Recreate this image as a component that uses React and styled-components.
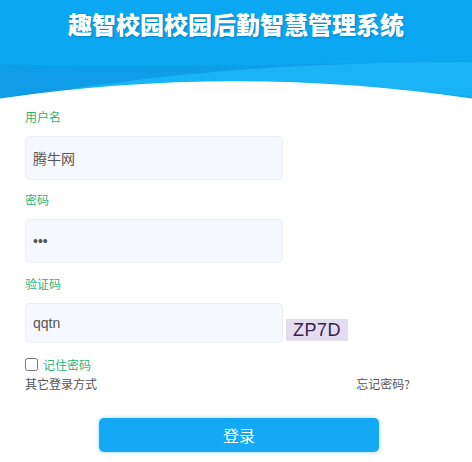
import React from "react";
import styled, { createGlobalStyle } from "styled-components";

const Global = createGlobalStyle`
  html, body { margin: 0; padding: 0; background: #fff; }
  body { font-family: "Liberation Sans", "Noto Sans CJK SC", sans-serif; }
  * { box-sizing: border-box; }
`;

const Page = styled.div`
  width: 472px;
  height: 462px;
  overflow: hidden;
  background: #fff;
`;

const Header = styled.header`
  background: #0aa8f2;
  display: flex;
  flex-direction: column;
`;

const Title = styled.h1`
  margin: 0;
  height: 60px;
  padding-top: 10px;
  text-align: center;
  color: #fff;
  font-family: "Noto Sans CJK SC", sans-serif;
  font-weight: 900;
  font-size: 24px;
  line-height: 28px;
  text-shadow: 1px 1px 2px rgba(0, 60, 120, 0.35);
`;

const Wave = styled.svg`
  display: block;
  width: 472px;
  height: 40px;
`;

const Form = styled.form`
  display: flex;
  flex-direction: column;
  padding: 7px 19px 0 25px;
`;

const Field = styled.div`
  display: flex;
  flex-direction: column;
  margin-top: ${(p) => p.$top || 0}px;
`;

const Label = styled.label`
  font-family: "Noto Sans CJK SC", sans-serif;
  font-size: 12px;
  line-height: 20px;
  color: #2db479;
  margin-bottom: 9px;
`;

const InputRow = styled.div`
  display: flex;
  align-items: flex-end;
  gap: 3px;
`;

const Input = styled.input`
  width: 258px;
  height: ${(p) => p.$h}px;
  border: 1px solid #e9eef7;
  border-radius: 5px;
  background: #f5f8fd;
  padding: 0 0 0 7px;
  font-family: "Liberation Sans", "Noto Sans CJK SC", sans-serif;
  font-size: 14px;
  color: #555;
  outline: none;
`;

const Captcha = styled.span`
  width: 62px;
  height: 22px;
  margin-bottom: 2px;
  background: #e2def0;
  color: #3b1d4e;
  font-family: "Liberation Sans", sans-serif;
  font-size: 18px;
  line-height: 22px;
  text-align: center;
  letter-spacing: 0.5px;
`;

const CheckRow = styled.label`
  display: flex;
  align-items: center;
  gap: 5px;
  height: 16px;
  margin-top: 13px;
  font-family: "Noto Sans CJK SC", sans-serif;
  font-size: 12px;
  color: #2db479;
`;

const Check = styled.input`
  margin: 0;
  width: 13px;
  height: 13px;
`;

const LinkRow = styled.div`
  display: flex;
  justify-content: space-between;
  width: 385px;
  height: 16px;
  margin-top: 4px;
  font-family: "Noto Sans CJK SC", sans-serif;
  font-size: 12px;
  line-height: 16px;
  color: #555;
`;

const Button = styled.button`
  align-self: center;
  width: 280px;
  height: 34px;
  margin-top: 26px;
  border: none;
  border-radius: 5px;
  background: #13a9f5;
  color: #fff;
  font-family: "Noto Sans CJK SC", sans-serif;
  font-size: 16px;
  box-shadow: 0 0 4px rgba(19, 169, 245, 0.45);
  cursor: pointer;
`;

export default function App() {
  return (
    <Page>
      <Global />
      <Header>
        <Title>趣智校园校园后勤智慧管理系统</Title>
        <Wave viewBox="0 0 472 40" preserveAspectRatio="none">
          <path d="M0,4 C150,9 300,4 472,1 L472,40 L0,40 Z" fill="#0f9de9" />
          <path d="M40,34 C170,12 300,2 472,2 L472,40 L0,40 Z" fill="#19b4f6" />
          <path d="M300,30 C380,30 440,32 472,36 L472,40 L300,40 Z" fill="#15abf2" />
          <path d="M0,38.5 Q236,4 472,38.5 L472,40 L0,40 Z" fill="#ffffff" />
        </Wave>
      </Header>
      <Form onSubmit={(e) => e.preventDefault()}>
        <Field>
          <Label>用户名</Label>
          <Input $h={44} defaultValue="腾牛网" />
        </Field>
        <Field $top={10}>
          <Label>密码</Label>
          <Input $h={44} type="password" defaultValue="123" />
        </Field>
        <Field $top={11}>
          <Label>验证码</Label>
          <InputRow>
            <Input $h={40} defaultValue="qqtn" />
            <Captcha>ZP7D</Captcha>
          </InputRow>
        </Field>
        <CheckRow>
          <Check type="checkbox" />
          记住密码
        </CheckRow>
        <LinkRow>
          <span>其它登录方式</span>
          <span>忘记密码?</span>
        </LinkRow>
        <Button type="submit">登录</Button>
      </Form>
    </Page>
  );
}
